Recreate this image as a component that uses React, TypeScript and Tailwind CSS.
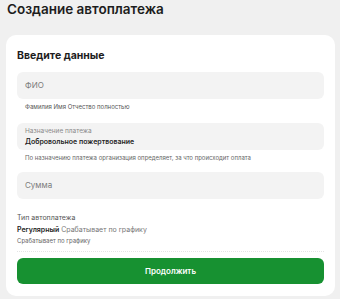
import React from 'react'

const font = { fontFamily: 'Inter, "Noto Sans", sans-serif' }

function Field({ label, value }: { label: string; value?: string }) {
  return (
    <div className="h-[27px] rounded-[6px] bg-[#f3f3f3] px-[8px] flex flex-col justify-center">
      {value ? (
        <>
          <span className="text-[6.5px] leading-[10px] text-[#8a8a8a]">{label}</span>
          <span className="text-[7px] leading-[11px] font-semibold text-[#1f1f1f]">{value}</span>
        </>
      ) : (
        <span className="text-[8px] leading-[11px] text-[#7a7a7a]">{label}</span>
      )}
    </div>
  )
}

export default function App() {
  return (
    <div className="w-[340px] h-[299px] overflow-hidden bg-[#f0f0f0] px-[6px]" style={font}>
      <h1 className="pl-[1px] pt-[1px] text-[13.5px] leading-[16px] font-semibold text-[#1d1d1d]">
        Создание автоплатежа
      </h1>

      <div className="mt-[18px] rounded-[10px] bg-white px-[11px] pt-[14px] pb-[12px] w-[329px]">
        <h2 className="text-[10.5px] leading-[14px] font-bold text-[#1d1d1d]">Введите данные</h2>

        <div className="mt-[9px]">
          <Field label="ФИО" />
          <p className="mt-[4px] px-[8px] text-[6px] leading-[8px] text-[#555]">
            Фамилия Имя Отчество полностью
          </p>
        </div>

        <div className="mt-[12px]">
          <Field label="Назначение платежа" value="Добровольное пожертвование" />
          <p className="mt-[4px] px-[8px] text-[6px] leading-[8px] text-[#666]">
            По назначению платежа организация определяет, за что происходит оплата
          </p>
        </div>

        <div className="mt-[10px]">
          <Field label="Сумма" />
        </div>

        <div className="mt-[14px] text-[#555]">
          <p className="text-[7px] leading-[10px]">Тип автоплатежа</p>
          <p className="mt-[2px] text-[7px] leading-[10px] text-[#777]">
            <span className="font-semibold text-[#1f1f1f]">Регулярный</span> Срабатывает по графику
          </p>
          <p className="mt-[1px] text-[6px] leading-[9px] text-[#666]">Срабатывает по графику</p>
        </div>

        <div className="mt-[6px] border-t border-dotted border-[#e4e4e4]" />

        <button className="mt-[6px] w-full h-[26px] rounded-[6px] bg-[#179131] text-white text-[8px] font-semibold">
          Продолжить
        </button>
      </div>
    </div>
  )
}
